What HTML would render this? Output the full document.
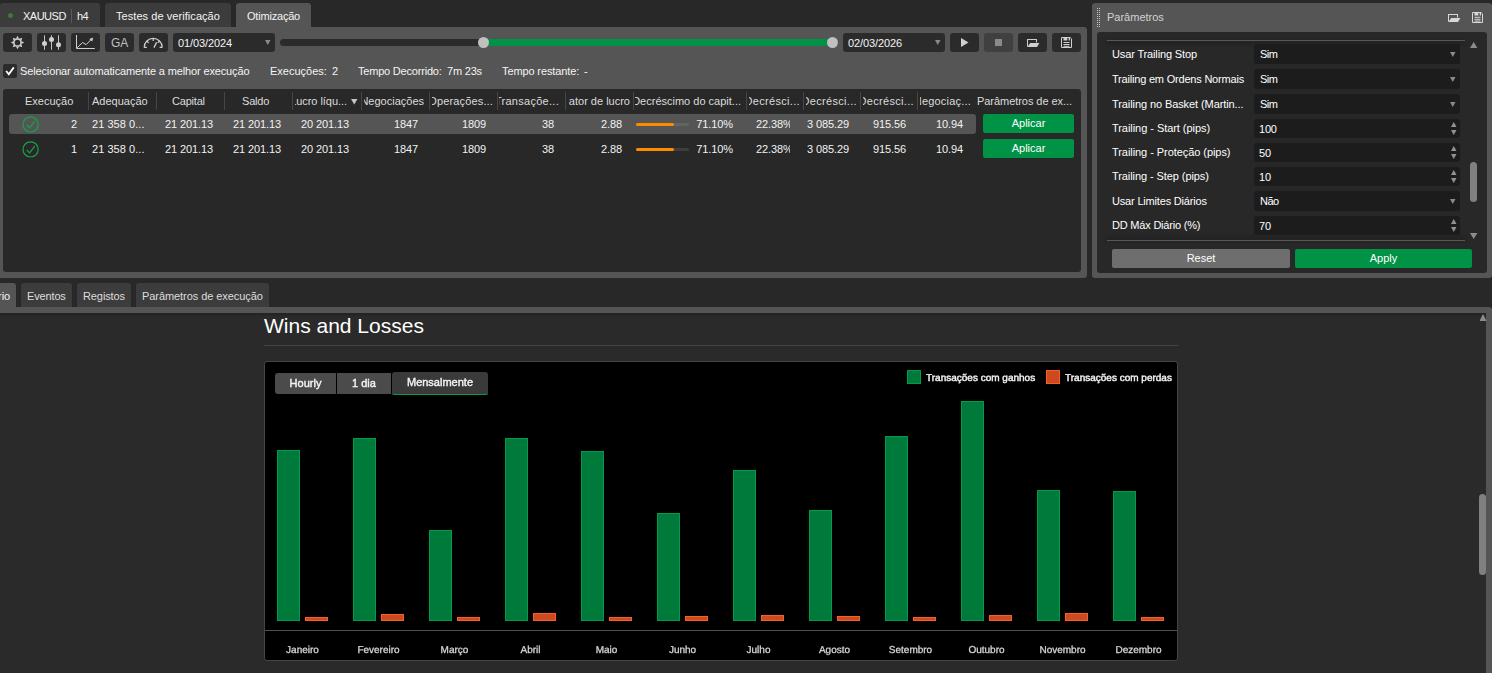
<!DOCTYPE html>
<html>
<head>
<meta charset="utf-8">
<title>Otimização</title>
<style>
html,body{margin:0;padding:0;}
body{width:1492px;height:673px;overflow:hidden;background:#282828;position:relative;
  font-family:"Liberation Sans",sans-serif;font-size:11px;color:#f4f4f4;}
.a{position:absolute;}
.t{position:absolute;white-space:nowrap;line-height:13px;font-size:11px;}
.tab{position:absolute;top:3px;height:24px;background:#3c3c3c;border-radius:3px 3px 0 0;}
.btn{position:absolute;top:33px;width:29px;height:19px;background:#2b2b2b;border-radius:3px;}
.sep{position:absolute;top:92px;width:1px;height:18px;background:#464646;}
.hc{position:absolute;top:95px;height:16px;overflow:hidden;}
.hc span{position:absolute;right:0;top:0;white-space:nowrap;line-height:13px;}
.c{position:absolute;white-space:nowrap;line-height:13px;text-align:right;}
.r1{top:118px;}
.r2{top:143px;}
.apl{position:absolute;left:983px;width:91px;height:19px;background:#009345;border-radius:2px;
  text-align:center;line-height:18px;font-size:11px;color:#fff;}
.lbl{position:absolute;left:1112px;white-space:nowrap;line-height:13px;color:#fff;}
.inp{position:absolute;left:1254px;width:206px;background:#1c1c1c;border-radius:3px;}
.inp span{position:absolute;left:6px;white-space:nowrap;line-height:13px;color:#fff;}
.dd{position:absolute;width:6px;height:5px;background:#8a8a8a;clip-path:polygon(0 0,92% 0,46% 100%);}
.up{position:absolute;width:6px;height:5px;background:#929292;clip-path:polygon(0 100%,92% 100%,46% 0);}
.dn{position:absolute;width:6px;height:5px;background:#929292;clip-path:polygon(0 0,92% 0,46% 100%);}
.btab{position:absolute;top:283px;height:24px;background:#3c3c3c;border-radius:3px 3px 0 0;}
.gb{position:absolute;width:21px;background:#007a3b;border:1px solid #009c4b;}
.ob{position:absolute;width:21px;background:#cb4a20;border:1px solid #f85e27;}
.cb{font-size:11px;color:#f4f4f4;-webkit-text-stroke:0.4px #f4f4f4;letter-spacing:0;will-change:transform;}
.lg{text-rendering:geometricPrecision;font-size:10px;color:#f4f4f4;-webkit-text-stroke:0.42px #f4f4f4;will-change:transform;}
.ml{will-change:transform;text-rendering:geometricPrecision;position:absolute;top:644px;width:75px;text-align:center;font-size:10px;line-height:13px;color:#d6d6d6;-webkit-text-stroke:0.3px #d6d6d6;white-space:nowrap;}
</style>
</head>
<body>

<!-- ===== top tabs ===== -->
<div class="tab" style="left:0;width:100px;"></div>
<div class="a" style="left:8px;top:13px;width:5px;height:5px;border-radius:50%;background:#3e7836;"></div>
<div class="t" style="left:23px;top:10px;letter-spacing:-0.5px;">XAUUSD</div>
<div class="a" style="left:71px;top:9px;width:1px;height:14px;background:#5a5a5a;"></div>
<div class="t" style="left:77px;top:10px;letter-spacing:-0.5px;">h4</div>
<div class="tab" style="left:105px;width:126px;"></div>
<div class="t" style="left:116px;top:10px;letter-spacing:0.06px;">Testes de verificação</div>
<div class="tab" style="left:236px;width:75px;background:#555;"></div>
<div class="t" style="left:247px;top:10px;letter-spacing:-0.2px;">Otimização</div>

<!-- ===== toolbar panel ===== -->
<div class="a" id="tbpanel" style="left:0;top:27px;width:1087px;height:251px;background:#555;border-radius:0 3px 3px 0;"></div>

<div class="btn" style="left:3px;"></div>
<div class="btn" style="left:37px;"></div>
<div class="btn" style="left:71px;"></div>
<div class="btn" style="left:105px;"></div>
<div class="btn" style="left:139px;"></div>
<div class="btn" style="left:173px;width:102px;"></div>
<div class="t" style="left:178px;top:37px;letter-spacing:-0.1px;">01/03/2024</div>
<div class="dd" style="left:265px;top:40px;"></div>

<!-- slider -->
<div class="a" style="left:280px;top:39px;width:558px;height:7px;border-radius:4px;background:#2b2b2b;"></div>
<div class="a" style="left:483px;top:39px;width:350px;height:7px;background:#009345;"></div>
<div class="a" style="left:478px;top:37px;width:11px;height:11px;border-radius:50%;background:#c0c0c0;"></div>
<div class="a" style="left:827px;top:37px;width:11px;height:11px;border-radius:50%;background:#c0c0c0;"></div>

<div class="btn" style="left:843px;width:102px;"></div>
<div class="t" style="left:848px;top:37px;letter-spacing:-0.1px;">02/03/2026</div>
<div class="dd" style="left:935px;top:40px;"></div>
<div class="btn" style="left:950px;"></div>
<div class="btn" style="left:984px;background:#404040;"></div>
<div class="btn" style="left:1018px;"></div>
<div class="btn" style="left:1052px;"></div>

<!-- toolbar icons -->
<svg class="a" style="left:0;top:27px;" width="1087" height="30" viewBox="0 27 1087 30">
  <!-- gear -->
  <g transform="translate(17.5 42.5)" fill="#d0d0d0">
    <path d="M0,-6.7 L1.5,-3.9 L-1.5,-3.9Z"/>
    <path d="M0,-6.7 L1.5,-3.9 L-1.5,-3.9Z" transform="rotate(45)"/>
    <path d="M0,-6.7 L1.5,-3.9 L-1.5,-3.9Z" transform="rotate(90)"/>
    <path d="M0,-6.7 L1.5,-3.9 L-1.5,-3.9Z" transform="rotate(135)"/>
    <path d="M0,-6.7 L1.5,-3.9 L-1.5,-3.9Z" transform="rotate(180)"/>
    <path d="M0,-6.7 L1.5,-3.9 L-1.5,-3.9Z" transform="rotate(225)"/>
    <path d="M0,-6.7 L1.5,-3.9 L-1.5,-3.9Z" transform="rotate(270)"/>
    <path d="M0,-6.7 L1.5,-3.9 L-1.5,-3.9Z" transform="rotate(315)"/>
    <circle r="3.6" fill="none" stroke="#d0d0d0" stroke-width="1.5"/>
  </g>
  <!-- sliders -->
  <g stroke="#c4c4c4" stroke-width="1" fill="#d0d0d0">
    <line x1="44.5" y1="35.3" x2="44.5" y2="49.8"/>
    <line x1="51.5" y1="35.3" x2="51.5" y2="49.8"/>
    <line x1="58.5" y1="35.3" x2="58.5" y2="49.8"/>
    <circle cx="44.5" cy="43.5" r="2.5" stroke="none"/>
    <circle cx="51.5" cy="39.5" r="2.5" stroke="none"/>
    <circle cx="58.5" cy="44.8" r="2.5" stroke="none"/>
  </g>
  <!-- chart -->
  <g stroke="#d0d0d0" stroke-width="1" fill="none">
    <path d="M76.5,35 L76.5,48.5 L94.8,48.5"/>
    <path d="M77,47.9 L82.5,42.5 L86.2,44.6 L91,39.7"/>
    <path d="M93.2,37.4 L89.3,39 L92.2,41.4Z" fill="#d0d0d0" stroke="none"/>
  </g>
  <!-- gauge -->
  <g stroke="#d0d0d0" stroke-width="1.2" fill="none">
    <path d="M144.2,47.4 A9,9 0 0 1 162.2,47.4"/>
    <path d="M144.2,47.4 L146.8,47.4 M162.2,47.4 L159.6,47.4"/>
    <path d="M153.2,38.4 L153.2,41 M146.8,41 L148.7,42.9 M159.6,41 L157.7,42.9"/>
    <path d="M154,47.6 L156.6,42.2" stroke-width="1.3"/>
  </g>
  <!-- play -->
  <path d="M961,38 L968.5,42.5 L961,47Z" fill="#d0d0d0"/>
  <!-- stop -->
  <rect x="995" y="39" width="7" height="7" fill="#8a8a8a"/>
  <!-- open -->
  <g fill="#d0d0d0">
    <path d="M1027,39 H1037 V42.6 H1036 V40 H1028 V46 L1027,47.2Z"/>
    <path d="M1030.2,43 H1039.4 L1037,47 H1027.4Z"/>
  </g>
  <!-- save -->
  <g fill="none" stroke="#d0d0d0" stroke-width="1">
    <path d="M1061.5,37.5 H1070.2 L1071.5,38.8 V47.5 H1061.5Z"/>
    <path d="M1063.5,42.5 H1069.5 M1063.5,44.5 H1069.5 M1063.5,46.3 H1069.5"/>
    <path d="M1063.5,37.5 H1067.3 V40.6 H1063.5Z M1068.7,37.5 H1070 V40.6 H1068.7Z" fill="#d0d0d0" stroke="none"/>
  </g>
</svg>
<div class="t" style="left:111px;top:37px;font-size:12px;color:#c0c0c0;letter-spacing:-0.2px;">GA</div>

<!-- row 2: checkbox & stats -->
<div class="a" style="left:3px;top:64px;width:14px;height:14px;border-radius:2px;background:#2b2b2b;"></div>
<svg class="a" style="left:3px;top:64px;" width="14" height="14"><path d="M3.2,7 L5.8,10.2 L10.8,3.4" fill="none" stroke="#fff" stroke-width="1.8"/></svg>
<div class="t" style="left:20px;top:65px;letter-spacing:-0.136px;">Selecionar automaticamente a melhor execução</div>
<div class="t" style="left:270px;top:65px;">Execuções:</div>
<div class="t" style="left:332px;top:65px;">2</div>
<div class="t" style="left:358px;top:65px;letter-spacing:-0.2px;">Tempo Decorrido:</div>
<div class="t" style="left:447px;top:65px;letter-spacing:-0.2px;">7m 23s</div>
<div class="t" style="left:502px;top:65px;letter-spacing:-0.12px;">Tempo restante:</div>
<div class="t" style="left:584px;top:65px;">-</div>

<!-- ===== table ===== -->
<div class="a" id="table" style="left:3px;top:89px;width:1078px;height:183px;background:#282828;border-radius:3px;"></div>
<div class="a" style="left:9px;top:114px;width:967px;height:20px;background:#555;border-radius:3px;"></div>

<div class="sep" style="left:88px;"></div>
<div class="sep" style="left:156px;"></div>
<div class="sep" style="left:224px;"></div>
<div class="sep" style="left:292px;"></div>
<div class="sep" style="left:361px;"></div>
<div class="sep" style="left:429px;"></div>
<div class="sep" style="left:497px;"></div>
<div class="sep" style="left:565px;"></div>
<div class="sep" style="left:633px;"></div>
<div class="sep" style="left:746px;"></div>
<div class="sep" style="left:803px;"></div>
<div class="sep" style="left:860px;"></div>
<div class="sep" style="left:917px;"></div>

<div id="hdr" style="color:#dcdcdc;">
<div class="t" style="left:25px;top:95px;">Execução</div>
<div class="t" style="left:92px;top:95px;">Adequação</div>
<div class="t" style="left:172px;top:95px;letter-spacing:-0.2px;">Capital</div>
<div class="t" style="left:242px;top:95px;letter-spacing:-0.2px;">Saldo</div>
<div class="hc" style="left:295px;width:52px;"><span style="letter-spacing:-0.05px">Lucro líqu...</span></div>
<div class="dd" style="left:351px;top:99px;background:#c4c4c4;width:7px;height:5.5px;"></div>
<div class="hc" style="left:364px;width:60px;"><span>Negociações</span></div>
<div class="hc" style="left:432px;width:61px;"><span style="letter-spacing:0.15px">Operações...</span></div>
<div class="hc" style="left:499px;width:60px;"><span style="letter-spacing:0.28px">Transaçõe...</span></div>
<div class="hc" style="left:569px;width:61px;"><span>Fator de lucro</span></div>
<div class="hc" style="left:635px;width:106px;"><span>Decréscimo do capit...</span></div>
<div class="hc" style="left:749px;width:51px;"><span style="letter-spacing:0.32px">Decrésci...</span></div>
<div class="hc" style="left:806px;width:51px;"><span style="letter-spacing:0.32px">Decrésci...</span></div>
<div class="hc" style="left:863px;width:51px;"><span style="letter-spacing:0.32px">Decrésci...</span></div>
<div class="hc" style="left:920px;width:51px;"><span style="letter-spacing:0.2px">Negociaç...</span></div>
<div class="t" style="left:977px;top:95px;letter-spacing:-0.05px;">Parâmetros de ex...</div>
</div>

<!-- check icons -->
<svg class="a" style="left:21px;top:115px;" width="20" height="45" viewBox="0 0 20 45">
  <g fill="none" stroke="#17a24a" stroke-width="1.2">
    <circle cx="9.6" cy="9.4" r="7.6"/><path d="M5.8,10 L8.6,12.8 L13.8,6.2"/>
    <circle cx="9.6" cy="34.4" r="7.6"/><path d="M5.8,35 L8.6,37.8 L13.8,31.2"/>
  </g>
</svg>

<!-- data rows -->
<div id="rows" style="color:#f2f2f2;letter-spacing:-0.1px;">
<div class="c r1" style="left:40px;width:37px;">2</div>
<div class="c r2" style="left:40px;width:37px;">1</div>
<div class="c r1" style="left:92px;text-align:left;letter-spacing:0.05px;">21 358 0...</div>
<div class="c r2" style="left:92px;text-align:left;letter-spacing:0.05px;">21 358 0...</div>
<div class="c r1" style="left:153px;width:60px;">21 201.13</div>
<div class="c r2" style="left:153px;width:60px;">21 201.13</div>
<div class="c r1" style="left:221px;width:60px;">21 201.13</div>
<div class="c r2" style="left:221px;width:60px;">21 201.13</div>
<div class="c r1" style="left:289px;width:60px;">20 201.13</div>
<div class="c r2" style="left:289px;width:60px;">20 201.13</div>
<div class="c r1" style="left:358px;width:60px;">1847</div>
<div class="c r2" style="left:358px;width:60px;">1847</div>
<div class="c r1" style="left:426px;width:60px;">1809</div>
<div class="c r2" style="left:426px;width:60px;">1809</div>
<div class="c r1" style="left:494px;width:60px;">38</div>
<div class="c r2" style="left:494px;width:60px;">38</div>
<div class="c r1" style="left:562px;width:60px;">2.88</div>
<div class="c r2" style="left:562px;width:60px;">2.88</div>
<div class="c r1" style="left:673px;width:60px;">71.10%</div>
<div class="c r2" style="left:673px;width:60px;">71.10%</div>
<div class="c r1" style="left:750px;width:40px;overflow:hidden;text-align:left;text-indent:6px;">22.38%</div>
<div class="c r2" style="left:750px;width:40px;overflow:hidden;text-align:left;text-indent:6px;">22.38%</div>
<div class="c r1" style="left:789px;width:60px;">3 085.29</div>
<div class="c r2" style="left:789px;width:60px;">3 085.29</div>
<div class="c r1" style="left:846px;width:60px;">915.56</div>
<div class="c r2" style="left:846px;width:60px;">915.56</div>
<div class="c r1" style="left:903px;width:60px;">10.94</div>
<div class="c r2" style="left:903px;width:60px;">10.94</div>
</div>

<!-- progress bars -->
<div class="a" style="left:636px;top:123px;width:53px;height:3px;border-radius:2px;background:#636363;"></div>
<div class="a" style="left:636px;top:123px;width:38px;height:3px;border-radius:2px;background:#ff8a00;"></div>
<div class="a" style="left:636px;top:148px;width:53px;height:3px;border-radius:2px;background:#3e3e3e;"></div>
<div class="a" style="left:636px;top:148px;width:38px;height:3px;border-radius:2px;background:#ff8a00;"></div>

<div class="apl" style="top:114px;">Aplicar</div>
<div class="apl" style="top:139px;">Aplicar</div>

<!-- ===== right panel ===== -->
<div class="a" style="left:1092px;top:3px;width:400px;height:275px;background:#555;border-radius:3px;"></div>
<div class="a" style="left:1097px;top:32px;width:390px;height:241px;background:#282828;border-radius:3px;"></div>
<svg class="a" style="left:1096px;top:8px;" width="5" height="20"><g fill="#c6c6c6">
<rect x="1" y="0" width="1" height="1"/><rect x="3" y="0" width="1" height="1"/>
<rect x="1" y="2" width="1" height="1"/><rect x="3" y="2" width="1" height="1"/>
<rect x="1" y="4" width="1" height="1"/><rect x="3" y="4" width="1" height="1"/>
<rect x="1" y="6" width="1" height="1"/><rect x="3" y="6" width="1" height="1"/>
<rect x="1" y="8" width="1" height="1"/><rect x="3" y="8" width="1" height="1"/>
<rect x="1" y="10" width="1" height="1"/><rect x="3" y="10" width="1" height="1"/>
<rect x="1" y="12" width="1" height="1"/><rect x="3" y="12" width="1" height="1"/>
<rect x="1" y="14" width="1" height="1"/><rect x="3" y="14" width="1" height="1"/>
<rect x="1" y="16" width="1" height="1"/><rect x="3" y="16" width="1" height="1"/>
<rect x="1" y="18" width="1" height="1"/><rect x="3" y="18" width="1" height="1"/>
</g></svg>
<div class="t" style="left:1107px;top:11px;color:#d2d2d2;">Parâmetros</div>
<svg class="a" style="left:1444px;top:10px;" width="44" height="16" viewBox="1444 10 44 16">
  <g fill="#d8d8d8">
    <path d="M1448,14 H1458 V17.6 H1457 V15 H1449 V21 L1448,22.2Z"/>
    <path d="M1451.2,18 H1460.4 L1458,22 H1448.4Z"/>
  </g>
  <g fill="none" stroke="#d8d8d8" stroke-width="1">
    <path d="M1472.5,12.5 H1481.2 L1482.5,13.8 V22.5 H1472.5Z"/>
    <path d="M1474.5,17.3 H1480.5 M1474.5,19.3 H1480.5 M1474.5,21.1 H1480.5"/>
    <path d="M1474.5,12.5 H1478.3 V15.6 H1474.5Z M1479.7,12.5 H1481 V15.6 H1479.7Z" fill="#d8d8d8" stroke="none"/>
  </g>
</svg>

<div class="a" style="left:1107px;top:40px;width:358px;height:1px;background:#585858;box-shadow:0 2px 4px rgba(0,0,0,.7);"></div>
<div class="a" style="left:1107px;top:240px;width:358px;height:1px;background:#585858;box-shadow:0 -2px 4px rgba(0,0,0,.7);"></div>

<div class="lbl" style="top:48px;letter-spacing:-0.14px;">Usar Trailing Stop</div>
<div class="lbl" style="top:73px;letter-spacing:-0.2px;">Trailing em Ordens Normais</div>
<div class="lbl" style="top:98px;letter-spacing:-0.09px;">Trailing no Basket (Martin...</div>
<div class="lbl" style="top:122px;letter-spacing:-0.05px;">Trailing - Start (pips)</div>
<div class="lbl" style="top:146px;letter-spacing:-0.06px;">Trailing - Proteção (pips)</div>
<div class="lbl" style="top:170px;letter-spacing:-0.08px;">Trailing - Step (pips)</div>
<div class="lbl" style="top:195px;letter-spacing:-0.18px;">Usar Limites Diários</div>
<div class="lbl" style="top:219px;letter-spacing:-0.2px;">DD Máx Diário (%)</div>

<div class="inp" style="top:44px;height:20px;"><span style="top:4px;letter-spacing:-0.5px;">Sim</span></div>
<div class="inp" style="top:69px;height:20px;"><span style="top:4px;letter-spacing:-0.5px;">Sim</span></div>
<div class="inp" style="top:94px;height:20px;"><span style="top:4px;letter-spacing:-0.5px;">Sim</span></div>
<div class="inp" style="top:119px;height:19px;"><span style="top:4px;left:5px;letter-spacing:-0.2px;">100</span></div>
<div class="inp" style="top:143px;height:19px;"><span style="top:4px;left:5px;letter-spacing:-0.2px;">50</span></div>
<div class="inp" style="top:167px;height:19px;"><span style="top:4px;left:5px;letter-spacing:-0.2px;">10</span></div>
<div class="inp" style="top:191px;height:20px;"><span style="top:4px;letter-spacing:-0.5px;">Não</span></div>
<div class="inp" style="top:216px;height:19px;"><span style="top:4px;left:5px;letter-spacing:-0.2px;">70</span></div>

<div class="dd" style="left:1450px;top:52px;"></div>
<div class="dd" style="left:1450px;top:77px;"></div>
<div class="dd" style="left:1450px;top:102px;"></div>
<div class="dd" style="left:1450px;top:199px;"></div>
<div class="up" style="left:1451px;top:122px;"></div><div class="dn" style="left:1451px;top:130px;"></div>
<div class="up" style="left:1451px;top:146px;"></div><div class="dn" style="left:1451px;top:154px;"></div>
<div class="up" style="left:1451px;top:170px;"></div><div class="dn" style="left:1451px;top:178px;"></div>
<div class="up" style="left:1451px;top:219px;"></div><div class="dn" style="left:1451px;top:227px;"></div>

<!-- scrollbar -->
<div class="up" style="left:1470px;top:42px;width:8px;height:6px;background:#8c8c8c;"></div>
<div class="dn" style="left:1470px;top:233px;width:8px;height:6px;background:#8c8c8c;"></div>
<div class="a" style="left:1470px;top:162px;width:7px;height:40px;border-radius:4px;background:#808080;"></div>

<div class="a" style="left:1112px;top:249px;width:178px;height:19px;background:#6e6e6e;border-radius:2px;text-align:center;line-height:18px;color:#fff;">Reset</div>
<div class="a" style="left:1295px;top:249px;width:177px;height:19px;background:#009345;border-radius:2px;text-align:center;line-height:18px;color:#fff;">Apply</div>


<!-- ===== bottom panel ===== -->
<div class="btab" style="left:0;width:16px;background:#555;border-radius:0 3px 0 0;"></div>
<div class="t" style="left:-2px;top:290px;">rio</div>
<div class="btab" style="left:21px;width:51px;"></div>
<div class="t" style="left:27px;top:290px;color:#dcdcdc;letter-spacing:-0.15px;">Eventos</div>
<div class="btab" style="left:77px;width:54px;"></div>
<div class="t" style="left:83px;top:290px;color:#dcdcdc;letter-spacing:-0.1px;">Registos</div>
<div class="btab" style="left:136px;width:133px;"></div>
<div class="t" style="left:142px;top:290px;color:#dcdcdc;letter-spacing:-0.07px;">Parâmetros de execução</div>
<div class="a" style="left:0;top:307px;width:1492px;height:366px;background:#555;border-radius:0 3px 0 0;"></div>
<div class="a" style="left:0;top:313px;width:1486px;height:360px;background:#2a2a2a;"></div>
<div class="a" style="left:0;top:313px;width:1486px;height:4px;background:linear-gradient(#222,#2a2a2a);"></div>
<div class="up" style="left:1479.5px;top:314px;width:7px;height:7px;background:#8c8c8c;clip-path:polygon(0 100%,100% 100%,50% 0);"></div>
<div class="a" style="left:1479px;top:494px;width:7px;height:81px;border-radius:4px;background:#808080;"></div>

<div class="t" style="left:264px;top:314px;font-size:21px;line-height:24px;color:#fff;">Wins and Losses</div>
<div class="a" style="left:264px;top:345px;width:914px;height:1px;background:#454545;"></div>
<div class="a" id="chart" style="left:264px;top:361px;width:912px;height:298px;background:#000;border:1px solid #454545;border-radius:3px;"></div>

<div class="a" style="left:275px;top:373px;width:61px;height:21px;background:#4b4b4b;border-radius:3px 0 0 3px;"></div>
<div class="a" style="left:337px;top:373px;width:54px;height:21px;background:#4b4b4b;"></div>
<div class="a" style="left:392px;top:372px;width:96px;height:22px;background:#3a3a3a;border-radius:3px 3px 2px 2px;border-bottom:1px solid #0a9a4a;"></div>
<div class="t cb" style="left:275px;top:377px;width:61px;text-align:center;">Hourly</div>
<div class="t cb" style="left:337px;top:377px;width:54px;text-align:center;">1 dia</div>
<div class="t cb" style="left:392px;top:376px;width:96px;text-align:center;">Mensalmente</div>

<div class="a" style="left:907px;top:370px;width:12px;height:12px;background:#007a3b;border:1px solid #009c4b;"></div>
<div class="t lg" style="left:926px;top:372px;">Transações com ganhos</div>
<div class="a" style="left:1046px;top:370px;width:12px;height:12px;background:#cb4a20;border:1px solid #f85e27;"></div>
<div class="t lg" style="left:1065px;top:372px;">Transações com perdas</div>

<div class="a" style="left:265px;top:630px;width:912px;height:1px;background:#505050;"></div>

<div class="gb" style="left:277px;top:450px;height:169px;"></div><div class="ob" style="left:305px;top:617px;height:2px;"></div><div class="ml" style="left:265px;">Janeiro</div>
<div class="gb" style="left:353px;top:438px;height:181px;"></div><div class="ob" style="left:381px;top:614px;height:5px;"></div><div class="ml" style="left:341px;">Fevereiro</div>
<div class="gb" style="left:429px;top:530px;height:89px;"></div><div class="ob" style="left:457px;top:617px;height:2px;"></div><div class="ml" style="left:417px;">Março</div>
<div class="gb" style="left:505px;top:438px;height:181px;"></div><div class="ob" style="left:533px;top:613px;height:6px;"></div><div class="ml" style="left:493px;">Abril</div>
<div class="gb" style="left:581px;top:451px;height:168px;"></div><div class="ob" style="left:609px;top:617px;height:2px;"></div><div class="ml" style="left:569px;">Maio</div>
<div class="gb" style="left:657px;top:513px;height:106px;"></div><div class="ob" style="left:685px;top:616px;height:3px;"></div><div class="ml" style="left:645px;">Junho</div>
<div class="gb" style="left:733px;top:470px;height:149px;"></div><div class="ob" style="left:761px;top:615px;height:4px;"></div><div class="ml" style="left:721px;">Julho</div>
<div class="gb" style="left:809px;top:510px;height:109px;"></div><div class="ob" style="left:837px;top:616px;height:3px;"></div><div class="ml" style="left:797px;">Agosto</div>
<div class="gb" style="left:885px;top:436px;height:183px;"></div><div class="ob" style="left:913px;top:617px;height:2px;"></div><div class="ml" style="left:873px;">Setembro</div>
<div class="gb" style="left:961px;top:401px;height:218px;"></div><div class="ob" style="left:989px;top:615px;height:4px;"></div><div class="ml" style="left:949px;">Outubro</div>
<div class="gb" style="left:1037px;top:490px;height:129px;"></div><div class="ob" style="left:1065px;top:613px;height:6px;"></div><div class="ml" style="left:1025px;">Novembro</div>
<div class="gb" style="left:1113px;top:491px;height:128px;"></div><div class="ob" style="left:1141px;top:617px;height:2px;"></div><div class="ml" style="left:1101px;">Dezembro</div>

</body>
</html>
